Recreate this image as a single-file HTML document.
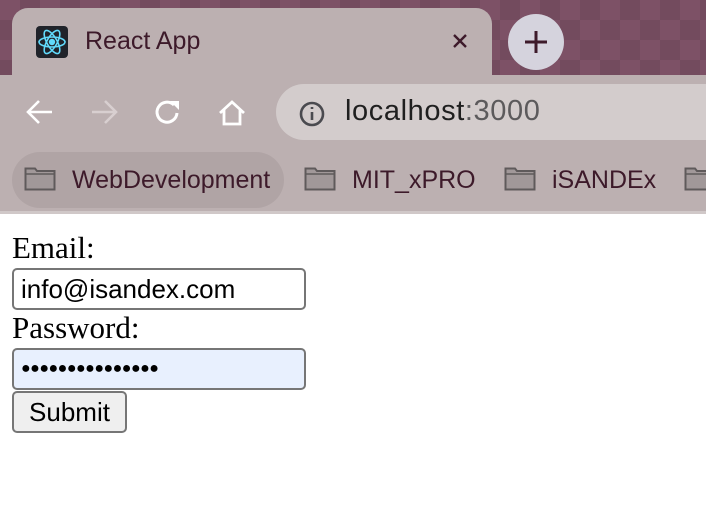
<!DOCTYPE html>
<html><head><style>
*{margin:0;padding:0;box-sizing:border-box}
body{width:706px;height:506px;overflow:hidden;background:#fff;position:relative;font-family:"Liberation Sans",sans-serif}
.top{position:absolute;left:0;top:0;width:706px;height:75px;background:#7d5166;
background-image:linear-gradient(45deg,rgba(0,0,0,.08) 25%,transparent 25%,transparent 75%,rgba(0,0,0,.08) 75%),linear-gradient(45deg,rgba(0,0,0,.08) 25%,transparent 25%,transparent 75%,rgba(0,0,0,.08) 75%);background-size:40px 40px;background-position:0 0,20px 20px}
.tab{position:absolute;left:12px;top:8px;width:480px;height:70px;background:#bcb0b1;border-radius:16px 16px 0 0}
.bar{position:absolute;left:0;top:75px;width:706px;height:138px;background:#bcb0b1}
.ab{position:absolute;left:276px;top:84px;width:460px;height:56px;background:#d3cccc;border-radius:28px}
.t{position:absolute;color:#3d1a2a;font-size:25px;white-space:nowrap}
.bm{position:absolute;top:152px;left:12px;width:272px;height:56px;border-radius:28px;background:#b0a4a5}
.line{position:absolute;left:0;top:211px;width:706px;height:3px;background:#d0c8c8}
.form{position:absolute;left:12px;font-family:"Liberation Serif",serif;font-size:31px;color:#000;line-height:34px}
.in{position:absolute;left:12px;width:294px;height:42px;border:2px solid #767676;border-radius:5px;font-size:26px;padding-left:7px;line-height:38px;white-space:nowrap}
</style></head><body>
<div class="top"></div>
<div class="tab"></div>
<div style="position:absolute;left:36px;top:26px;width:32px;height:32px;background:#20232a;border-radius:4px"></div>
<svg style="position:absolute;left:36px;top:26px" width="32" height="32" viewBox="0 0 32 32" fill="none" stroke="#61dafb" stroke-width="1.6"><ellipse cx="16" cy="16" rx="13" ry="5"/><ellipse cx="16" cy="16" rx="13" ry="5" transform="rotate(60 16 16)"/><ellipse cx="16" cy="16" rx="13" ry="5" transform="rotate(-60 16 16)"/><circle cx="16" cy="16" r="2.4" fill="#61dafb"/></svg>
<div class="t" style="left:85px;top:27px">React App</div>
<svg style="position:absolute;left:452px;top:33px" width="16" height="16" stroke="#3d1a2a" stroke-width="2.4"><path d="M2 2L14 14M14 2L2 14"/></svg>
<div style="position:absolute;left:508px;top:14px;width:56px;height:56px;border-radius:50%;background:#d5d3dd"></div>
<svg style="position:absolute;left:524px;top:30px" width="24" height="24" stroke="#3d1a2a" stroke-width="3"><path d="M12 1V23M1 12H23"/></svg>
<div class="bar"></div>
<svg style="position:absolute;left:24px;top:96px" width="32" height="32" fill="none" stroke="#fff" stroke-width="2.6"><path d="M28 16H4M15 5L4 16L15 27"/></svg>
<svg style="position:absolute;left:88px;top:96px" width="32" height="32" fill="none" stroke="#d8cfd0" stroke-width="2.6"><path d="M4 16H28M17 5L28 16L17 27"/></svg>
<svg style="position:absolute;left:152px;top:96px" width="32" height="32" fill="none" stroke="#fff" stroke-width="3"><path d="M25 17A10 10 0 1 1 22 9"/><path d="M18 5H27V14Z" fill="#fff" stroke="none"/></svg>
<svg style="position:absolute;left:216px;top:96px" width="32" height="32" fill="none" stroke="#fff" stroke-width="2.8"><path d="M4 17L16 6L28 17M8 14V28H24V14"/></svg>
<div class="ab"></div>
<svg style="position:absolute;left:298px;top:100px" width="28" height="28" fill="none" stroke="#4a4a4f" stroke-width="2.6"><circle cx="14" cy="14" r="11"/><path d="M14 12V20M14 7V9"/></svg>
<div class="t" style="left:345px;top:95px;font-size:29px;letter-spacing:0.6px;color:#1f1f1f">localhost<span style="color:#5c5a5c">:3000</span></div>
<div class="bm"></div>
<svg width="0" height="0"><defs><g id="f"><path d="M1.5 2.5H11L13 5H30.5V23.5H1.5Z" fill="#a19899" stroke="#5f5a5b" stroke-width="2"/><path d="M1.5 8H30.5" stroke="#5f5a5b" stroke-width="1.6"/></g></defs></svg>
<svg style="position:absolute;left:24px;top:166px" width="32" height="26"><use href="#f"/></svg>
<div class="t" style="left:72px;top:166px">WebDevelopment</div>
<svg style="position:absolute;left:304px;top:166px" width="32" height="26"><use href="#f"/></svg>
<div class="t" style="left:352px;top:166px">MIT_xPRO</div>
<svg style="position:absolute;left:504px;top:166px" width="32" height="26"><use href="#f"/></svg>
<div class="t" style="left:552px;top:166px">iSANDEx</div>
<svg style="position:absolute;left:684px;top:166px" width="32" height="26"><use href="#f"/></svg>
<div class="line"></div>
<div class="form" style="top:231px">Email:</div>
<div class="in" style="top:268px;background:#fff">info@isandex.com</div>
<div class="form" style="top:311px">Password:</div>
<div class="in" style="top:348px;background:#e8f0fe;font-size:16px;letter-spacing:-0.5px">●●●●●●●●●●●●●●●</div>
<div style="position:absolute;left:12px;top:391px;width:115px;height:42px;border:2px solid #767676;border-radius:5px;background:#efefef;font-size:26px;text-align:center;line-height:38px">Submit</div>
</body></html>
